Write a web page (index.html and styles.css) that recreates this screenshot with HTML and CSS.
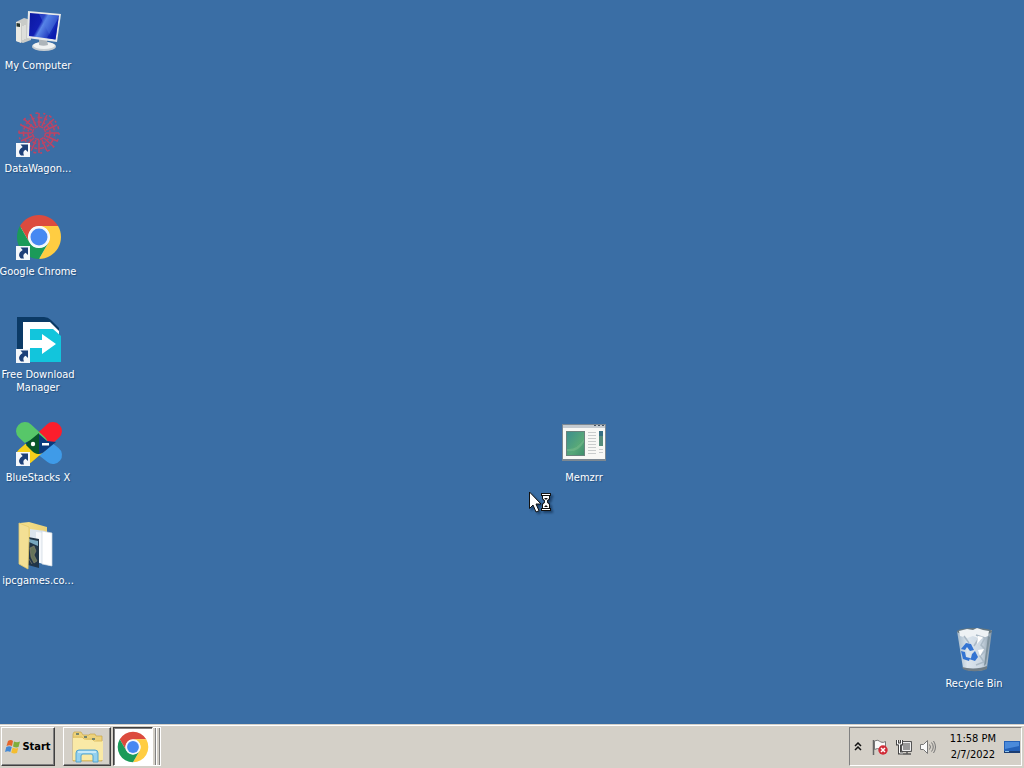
FILE: index.html
```html
<!DOCTYPE html>
<html lang="en">
<head>
<meta charset="utf-8">
<title>Desktop</title>
<link rel="stylesheet" href="styles.css">
</head>
<body>
<svg class="defs" aria-hidden="true">
  <defs>
    <linearGradient id="screen" x1="0" y1="0" x2="1" y2="0.5">
      <stop offset="0" stop-color="#0a17a0"/><stop offset="0.45" stop-color="#1220b4"/><stop offset="0.55" stop-color="#5a86e8"/><stop offset="1" stop-color="#0b1cae"/>
    </linearGradient>
    <linearGradient id="paper" x1="0" y1="0" x2="1" y2="1">
      <stop offset="0" stop-color="#3d8f8e"/><stop offset="0.6" stop-color="#57a878"/><stop offset="1" stop-color="#3f8f6d"/>
    </linearGradient>
    <linearGradient id="folder" x1="0" y1="0" x2="1" y2="0">
      <stop offset="0" stop-color="#f5e08c"/><stop offset="1" stop-color="#ecd277"/>
    </linearGradient>
    <linearGradient id="bin" x1="0" y1="0" x2="1" y2="0">
      <stop offset="0" stop-color="#a9bccb"/><stop offset="0.3" stop-color="#e4ebf1"/><stop offset="0.7" stop-color="#d2dce5"/><stop offset="1" stop-color="#8798a6"/>
    </linearGradient>
    <symbol id="shortcut" viewBox="0 0 14 14">
      <path d="M0 0h14v14H0z" fill="#f4f7fb"/>
      <path d="M4.500 1.500H12V9L9.600 6.800C7.200 8 6.800 10 8 12.500H5C2 10 2.500 6.500 6.700 4z" fill="#1d3f78"/>
    </symbol>
    <symbol id="chrome" viewBox="0 0 48 48">
      <circle cx="24" cy="24" r="21" fill="#fff"/>
      <path d="M24 13H43.050A22 22 0 0 0 4.950 13L14.470 29.500A11 11 0 0 1 24 13z" fill="#dc4b3e"/>
      <path d="M24 13H43.050A22 22 0 0 0 4.950 13L14.470 29.500A11 11 0 0 1 24 13z" fill="#ffcd42" transform="rotate(120 24 24)"/>
      <path d="M24 13H43.050A22 22 0 0 0 4.950 13L14.470 29.500A11 11 0 0 1 24 13z" fill="#1b9a59" transform="rotate(240 24 24)"/>
      <circle cx="24" cy="24" r="10.500" fill="#f3f6fb"/>
      <circle cx="24" cy="24" r="8.500" fill="#4688f2"/>
    </symbol>
  </defs>
</svg>

<main class="desktop">
  <nav class="icon-column" aria-label="Desktop icons">
    <button class="desk-icon" type="button">
      <svg class="picture" viewBox="0 0 48 48" aria-hidden="true">
        <path d="M2 14l8-4 7 2v20l-8 3-7-2z" fill="#c9cbc8"/>
        <path d="M2 14l5 1v20l-5-2z" fill="#e9e9e3"/>
        <path d="M2.500 15l3.500.600v3.500L2.500 18.500z" fill="#27352f"/>
        <path d="M9 18v14M11 17v14" stroke="#f2f2ee" fill="none"/>
        <ellipse cx="30" cy="38.500" rx="12" ry="4.500" fill="#c6ccd0"/>
        <ellipse cx="30" cy="37.500" rx="11" ry="3.500" fill="#f0f2f2"/>
        <path d="M25 30l8 2 1 5c-3 1-6 1-9 0z" fill="#aeb5ba"/>
        <path d="M14 3l33 3-4 28-30-4z" fill="#e6e9ea"/>
        <path d="M16 5l29 2.500-3.500 24L15 28z" fill="url(#screen)"/>
        <path d="M25 6l19 2-1 8-7 12z" fill="#4e7ee4" opacity=".4"/>
        <path d="M33 30l8.500 1.500L44.500 10z" fill="#0a1db0" opacity=".7"/>
      </svg>
      <span class="label">My Computer</span>
    </button>

    <button class="desk-icon" type="button">
      <svg class="picture" viewBox="0 0 48 48" aria-hidden="true">
        <circle cx="25" cy="22" r="18" fill="#8c5585" opacity=".25"/>
        <g fill="none" stroke="#c04362" stroke-width="1.500">
          <circle cx="25" cy="22" r="6.500" stroke-dasharray="4 1"/>
          <circle cx="25" cy="22" r="11" stroke-dasharray="4 2 2 2"/>
          <circle cx="25" cy="22" r="15.500" stroke-dasharray="3 3 5 2"/>
          <circle cx="25" cy="22" r="20" stroke-dasharray="2 4 3 5"/>
          <path d="M25 2v13M25 29v13M5 22h13M32 22h13M10 8l10 9M30 27l10 9M40 8L30 17M20 27L10 36M17 4l5 11M33 4l-5 11M7 14l11 5M43 14l-11 5M7 30l11-5M43 30l-11-5M17 40l5-11M33 40l-5-11"/>
        </g>
        <use href="#shortcut" x="2" y="32" width="14" height="14"/>
      </svg>
      <span class="label">DataWagon...</span>
    </button>

    <button class="desk-icon" type="button">
      <svg class="picture" viewBox="0 0 48 48" aria-hidden="true">
        <use href="#chrome" x="1" y="-1" width="48" height="48"/>
        <use href="#shortcut" x="2" y="32" width="14" height="14"/>
      </svg>
      <span class="label">Google Chrome</span>
    </button>

    <button class="desk-icon" type="button">
      <svg class="picture" viewBox="0 0 48 48" aria-hidden="true">
        <path d="M3 0h27q4 0 7 3l8 8v34H3z" fill="#0b3a66"/>
        <path d="M9 5h27l9 9v20L9 40z" fill="#fff"/>
        <path d="M16 12h23l8 7v26H16z" fill="#12c5dc"/>
        <path d="M16 23h12v-6l14 10-14 10v-6H16z" fill="#fff"/>
        <use href="#shortcut" x="2" y="32" width="14" height="14"/>
      </svg>
      <span class="label">Free Download<br>Manager</span>
    </button>

    <button class="desk-icon" type="button">
      <svg class="picture" viewBox="0 0 48 48" aria-hidden="true">
        <g stroke-width="18" stroke-linecap="round">
          <path d="M25 24L39 35" stroke="#3f9be8"/>
          <path d="M25 24L11 36" stroke="#f5cf1c"/>
          <path d="M25 24L39 11" stroke="#fb1e2c"/>
          <path d="M25 24L11 11" stroke="#57c769"/>
        </g>
        <path d="M25 14l8 7 9 1-11 9c-4 4-8 4-11 0l-9-8 8-4z" fill="#0a3a7c"/>
        <path d="M14 22l11-9v21c-3 0-5-1-7-3l-6-6z" fill="#08552a"/>
        <circle cx="19" cy="24" r="2.200" fill="#fff"/>
        <path d="M28 23h7v2.500h-7z" fill="#fff"/>
        <use href="#shortcut" x="2" y="32" width="14" height="14"/>
      </svg>
      <span class="label">BlueStacks X</span>
    </button>

    <button class="desk-icon" type="button">
      <svg class="picture" viewBox="0 0 48 48" aria-hidden="true">
        <path d="M6 0l9-1 18 5v10H12z" fill="url(#folder)"/>
        <path d="M16 6l15 2v31l-15-2z" fill="#dbe5ee"/>
        <path d="M22 9l10 1 5 4v29l-15-4z" fill="#f5f8fb"/>
        <path d="M28 8l10 2v33l-10-2z" fill="#fff" stroke="#ccd6df" stroke-width=".7"/>
        <path d="M14 14l11 2v29l-11-3z" fill="#203548"/>
        <path d="M15 16l9 2v5l-9-4z" fill="#76a7bf"/>
        <path d="M16 25l4-2 2 5-2 4 3 6-3 2-3-6zM15 36l3 5" fill="#66745b" stroke="#8e886e" stroke-width=".6"/>
        <path d="M5 0l10 4v13l-1 29-9-5z" fill="#f3df94" stroke="#e2c96f" stroke-width=".8"/>
      </svg>
      <span class="label">ipcgames.co...</span>
    </button>
  </nav>

  <button class="desk-icon placed memzrr" type="button">
    <svg class="picture" viewBox="0 0 48 48" aria-hidden="true">
      <path d="M2 4h44v37H2z" fill="#7b8791"/>
      <path d="M3 5h42v34H3z" fill="#f8f8f5"/>
      <path d="M3 5h42v3H3z" fill="#c5cbd0"/>
      <path d="M34 5h2v1h-2zM38 5h2v1h-2zM42 5h2v1h-2z" fill="#455464"/>
      <path d="M6 11h19v25H6z" fill="#69837d"/>
      <path d="M7 12h17v23H7z" fill="url(#paper)"/>
      <path d="M7 29q10 1 17-10v3Q18 33 7 31z" fill="#7bbd8d" opacity=".5"/>
      <path d="M28 12.500h8M28 15.500h8M28 18.500h8M28 21.500h8M28 24.500h8M28 27.500h8M28 30.500h8M28 33.500h8M39 29.500h4M39 32.500h4" stroke="#c9cccc"/>
      <path d="M39 11h4v15h-4z" fill="#568c7b"/>
      <path d="M39 11h4v5h-4z" fill="#356e82"/>
    </svg>
    <span class="label">Memzrr</span>
  </button>

  <button class="desk-icon placed recycle" type="button">
    <svg class="picture" viewBox="0 0 48 48" aria-hidden="true">
      <path d="M7 5l35-1-5 38c-5 4-18 4-24 0z" fill="url(#bin)" opacity=".95"/>
      <path d="M12 41c6 2 19 2 25-1v3c-6 3-19 3-24 0z" fill="#6f7c85"/>
      <ellipse cx="24.500" cy="5.500" rx="17.500" ry="3.500" fill="#66777f"/>
      <path d="M9 5l8-2 6 1 4-2 6 2 6 1-1 5-7 3-8-3-6 2-7-2z" fill="#eef2f5"/>
      <path d="M26 9l9 3-4 7 5 5-6 6 4 6-8 3M14 10l5 7M29 12l-5 8" fill="none" stroke="#aab9c6" stroke-width="1.500"/>
      <path d="M28 10l5 1-6 7zM28 24l6-1-4 7z" fill="#fff"/>
      <path d="M38 10l2 1-4 27-2 2z" fill="#7e919d"/>
      <path d="M16 17l5 1 3 6-4 1-3-4-2 3-4-1zM11 25l4 1 1 5 4 1-1 3-6-2zM22 28l3-3 3 6-3 4-6-2 2-1z" fill="#3474d2"/>
    </svg>
    <span class="label">Recycle Bin</span>
  </button>

  <svg class="cursor" viewBox="0 0 24 22" aria-hidden="true">
    <path d="M1.500 1v16.500l3.500-3.500 3 7 3-1.300-3-6.700h5z" fill="#fff" stroke="#111" stroke-linejoin="round"/>
    <path d="M13 2h10v3h-1v3l-2.500 2.500L22 13v4h1v3H13v-3h1v-4l2.500-2.500L14 8V5h-1z" fill="#111"/>
    <path d="M14 3h8v1h-8zM14 18h8v1h-8zM15 5h6v2.500l-2 2v2l2 2V17h-6v-3.500l2-2v-2l-2-2z" fill="#fff"/>
    <path d="M16 7h4l-2 2zM16 16l2-2 2 2z" fill="#111"/>
  </svg>
</main>

<footer class="taskbar">
  <button class="task start" type="button">
    <svg class="flag" viewBox="0 0 16 16" aria-hidden="true">
      <path d="M3 2q3-2 5 0L7 7Q4.500 5.500 1.500 7z" fill="#e4652b"/>
      <path d="M9 2.500q3 1.500 6 0L13.500 8Q11 9 8 7.500z" fill="#7fae3c"/>
      <path d="M1.300 8q3-1.500 5.500 0l-1.500 5Q3 11.500 0 13z" fill="#4388d4"/>
      <path d="M7.700 8.500q3 1.500 5.500.500L12 14q-3 1-5.800-.500z" fill="#f4bd30"/>
    </svg>
    <span>Start</span>
  </button>
  <button class="task explorer" type="button" aria-label="Windows Explorer">
    <svg class="task-picture" viewBox="0 0 32 32" aria-hidden="true">
      <path d="M2 3l1-2h7l2 3h6l1-1h5l1 2h6v25H2z" fill="#edd27b" stroke="#c9a848" stroke-width=".7"/>
      <path d="M2 7h11l2 2h9l2 1h6v19H2z" fill="#f9e9a6"/>
      <path d="M3 6h8l2 2h8l2 2h8" fill="none" stroke="#dfbf62"/>
      <path d="M5 3h3M13 6h3M21 8h3" stroke="#4c6c6c" stroke-width="1.500"/>
      <path d="M5 31V22q0-3 3-3h16q3 0 3 3v9h-5v-6q0-2-2-2h-8q-2 0-2 2v6z" fill="#94d1ef" stroke="#55a4cf"/>
      <path d="M7 21h18" stroke="#d7f1fb" stroke-width="1.500"/>
    </svg>
  </button>
  <div class="stack">
    <button class="task active" type="button" aria-label="Google Chrome">
      <svg class="task-picture" viewBox="1 1 46 46" aria-hidden="true"><use href="#chrome" width="48" height="48"/></svg>
    </button>
    <span class="leaf"></span>
    <span class="leaf"></span>
  </div>

  <div class="tray">
    <button class="tray-button chevron" type="button" aria-label="Show hidden icons">
      <svg viewBox="0 0 8 10" width="8" height="10" aria-hidden="true"><path d="M1 4l3-3 3 3M1 8l3-3 3 3" fill="none" stroke="#111" stroke-width="1.500"/></svg>
    </button>
    <button class="tray-button" type="button" aria-label="Action Center">
      <svg viewBox="0 0 16 16" width="16" height="16" aria-hidden="true">
        <path d="M1.500 1v15" stroke="#666" stroke-width="1.500"/>
        <path d="M2.500 2q3-1.500 5 0l1 1q3 1 5-.500v8q-3 1-5 0-3-2-6 0z" fill="#fafafa" stroke="#777"/>
        <circle cx="11" cy="11" r="4.700" fill="#d12c38"/>
        <path d="M9 9l4 4M13 9l-4 4" stroke="#fff" stroke-width="1.500"/>
      </svg>
    </button>
    <button class="tray-button" type="button" aria-label="Network">
      <svg viewBox="0 0 16 16" width="16" height="16" aria-hidden="true">
        <path d="M5.500 2.500h10v10h-10z" fill="#999" stroke="#555"/>
        <path d="M6.500 3.500h8v8h-8z" fill="none" stroke="#eee"/>
        <path d="M7 15h8M11 13v2" stroke="#555" stroke-width="1.500"/>
        <path d="M1.500 1v4h4V1M3.500 5v9H7" fill="none" stroke="#444" stroke-width="3"/>
        <path d="M1.500 1v4h4V1M3.500 5v9H7" fill="none" stroke="#fff"/>
      </svg>
    </button>
    <button class="tray-button" type="button" aria-label="Volume">
      <svg viewBox="0 0 16 16" width="16" height="16" aria-hidden="true">
        <path d="M.500 5.500h3l4-4v13l-4-4h-3z" fill="#fafafa" stroke="#777"/>
        <path d="M9.500 5.500q2 2.500 0 5M11.500 3.500q3.500 4.500 0 9M13.500 2q4 6 0 12" fill="none" stroke="#777"/>
      </svg>
    </button>
    <button class="clock" type="button"><time datetime="2022-02-07T23:58">11:58 PM<br>2/7/2022</time></button>
    <button class="show-desktop" type="button" aria-label="Show desktop">
      <svg viewBox="0 0 16 16" width="16" height="16" aria-hidden="true">
        <path d="M0 2h16v11H0z" fill="#2461b8"/>
        <path d="M1 3h14v4L1 10z" fill="#4a8adb"/>
        <path d="M0 12h16v2H0z" fill="#1b3d73"/>
        <path d="M1 12h4v1H1z" fill="#8fc6ed"/>
      </svg>
    </button>
  </div>
</footer>
</body>
</html>
```
FILE: styles.css
```css
* {
  box-sizing: border-box;
}

body {
  margin: 0;
  min-height: 100vh;
  display: flex;
  flex-direction: column;
  background: #3a6ea5;
  font: 11px/13px "DejaVu Sans Condensed", "Noto Sans", sans-serif;
}

button {
  margin: 0;
  padding: 0;
  border: 0;
  background: none;
  color: inherit;
  font: inherit;
}

.defs {
  position: absolute;
  width: 0;
  height: 0;
}

.desktop {
  position: relative;
  flex: 1;
  overflow: hidden;
  color: #fff;
}

.icon-column {
  display: flex;
  flex-direction: column;
  width: 76px;
}

.desk-icon {
  display: flex;
  flex-direction: column;
  align-items: center;
  gap: 3px;
  width: 76px;
  height: 103px;
  padding-top: 8px;
  text-align: center;
}

.picture {
  width: 48px;
  height: 48px;
  flex: none;
  overflow: visible;
}

.label {
  white-space: nowrap;
  text-shadow: 1px 1px 1px #234e7d;
}

.placed {
  position: absolute;
}

.memzrr {
  left: 546px;
  top: 412px;
}

.recycle {
  right: 12px;
  bottom: 3px;
}

.cursor {
  position: absolute;
  left: 528px;
  top: 491px;
  width: 24px;
  height: 22px;
  filter: drop-shadow(2px 2px 1px #1d436d);
}

.taskbar {
  display: flex;
  height: 44px;
  padding: 2px 2px 2px 1px;
  border-top: 1px solid #d4d0c8;
  box-shadow: inset 0 1px #fff;
  background: #d4d0c8;
  color: #000;
}

.task {
  display: flex;
  align-items: center;
  justify-content: center;
  border: 1px solid;
  border-color: #fff #404040 #404040 #fff;
  box-shadow: inset -1px -1px #808080;
}

.start {
  gap: 1px;
  width: 54px;
  margin-right: 8px;
  font-weight: bold;
}

.flag {
  width: 16px;
  height: 16px;
}

.explorer {
  width: 48px;
  margin-right: 2px;
}

.task-picture {
  width: 32px;
  height: 32px;
}

.stack {
  display: flex;
}

.active {
  width: 40px;
  background: #fff;
  border-color: #404040 #fff #fff #404040;
  box-shadow: inset 1px 1px #808080;
}

.leaf {
  width: 4px;
  border: solid #fff;
  border-width: 1px 1px 1px 0;
  box-shadow: inset -1px 0 #808080;
}

.tray {
  display: flex;
  align-items: center;
  gap: 8px;
  margin-left: auto;
  padding: 0 1px 0 4px;
  border: 1px solid;
  border-color: #808080 #fff #fff #808080;
}

.tray-button,
.show-desktop {
  display: flex;
}

.chevron {
  margin-right: 2px;
}

.clock {
  margin-left: 6px;
  line-height: 16px;
  text-align: center;
}
```
